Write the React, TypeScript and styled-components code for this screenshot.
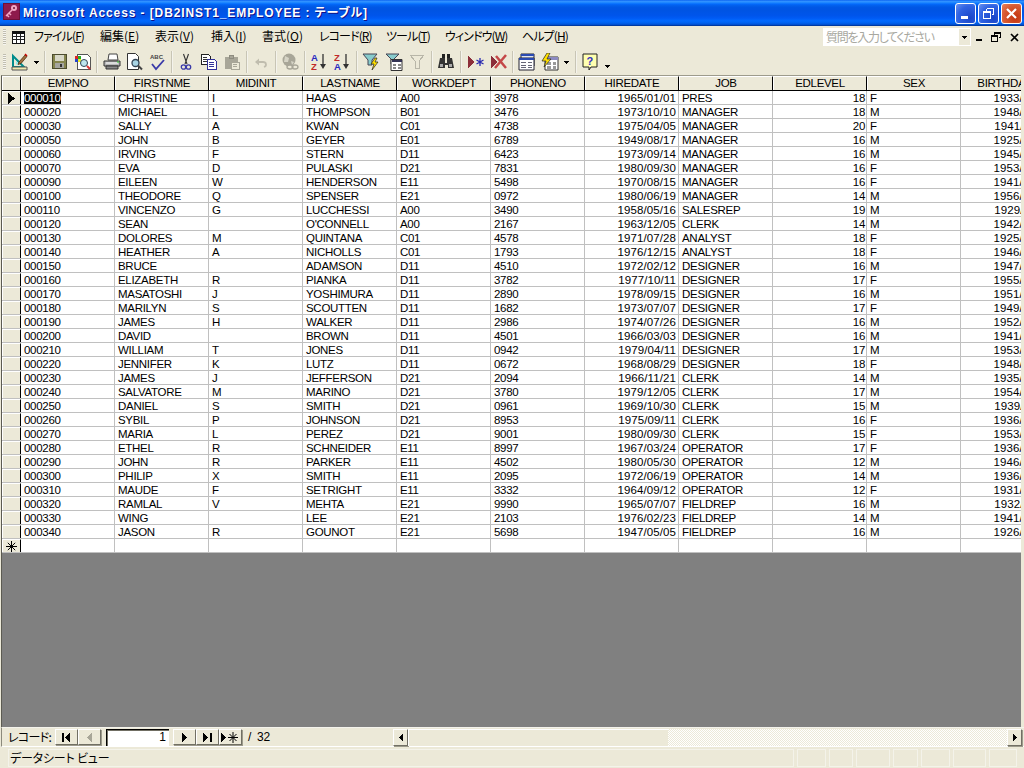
import React from "react";
import styled, { createGlobalStyle } from "styled-components";

const Global = createGlobalStyle`
  html, body { margin: 0; padding: 0; background: #ece9d8; overflow: hidden; }
  * { box-sizing: border-box; }
`;

const UI = `"Liberation Sans", "Noto Sans CJK JP", sans-serif`;
const JP = `"Noto Sans CJK JP", "Liberation Sans", sans-serif`;

const Window = styled.div`
  width: 1024px;
  height: 768px;
  display: flex;
  flex-direction: column;
  background: #ece9d8;
  font: 12px ${UI};
  color: #000;
  overflow: hidden;
`;

const TitleBar = styled.div`
  height: 26px;
  flex: none;
  display: flex;
  align-items: center;
  padding: 0 2px 3px 3px;
  background: linear-gradient(180deg, #0058ee 0%, #3593ff 4%, #288eff 8%, #127dff 12%, #0369fc 16%, #0262ee 20%, #0057e5 28%, #0054e3 40%, #0055eb 60%, #005bf5 70%, #026afe 80%, #0062ef 88%, #0052d6 94%, #0040ab 97%, #003092 100%);
`;

const TitleText = styled.div`
  margin-left: 3px;
  flex: 1;
  color: #fff;
  font: bold 12px ${UI};
  font-feature-settings: "palt";
  letter-spacing: 0.9px;
  text-shadow: 1px 1px 0 #0f1089;
  white-space: nowrap;
`;

const CaptionButton = styled.div<{ $close?: boolean }>`
  width: 21px;
  height: 21px;
  margin: 3px 0 0 2px;
  border: 1px solid #fff;
  border-radius: 3px;
  display: flex;
  align-items: center;
  justify-content: center;
  background: ${(p) =>
    p.$close
      ? "radial-gradient(circle at 70% 70%, #c2340f 0%, #d85a32 60%, #e9835f 100%)"
      : "radial-gradient(circle at 75% 75%, #1a46c8 0%, #2f62e2 60%, #6a92f0 100%)"};
`;

const MenuBar = styled.div`
  height: 22px;
  flex: none;
  display: flex;
  align-items: center;
  padding-left: 3px;
`;

const Grip = styled.div<{ $h: number }>`
  width: 3px;
  height: ${(p) => p.$h}px;
  flex: none;
  background: repeating-linear-gradient(180deg, #c1beb0 0 1px, #f7f6f0 1px 2px);
`;

const MenuIcon = styled.div`
  width: 14px;
  height: 14px;
  margin-left: 5px;
  flex: none;
  display: flex;
`;

const MenuItem = styled.div<{ $w: number; $tight?: boolean }>`
  width: ${(p) => p.$w}px;
  flex: none;
  font: 12px ${JP};
  font-feature-settings: "palt";
  letter-spacing: ${(p) => (p.$tight ? "-0.9px" : "0")};
  line-height: 14px;
  padding-bottom: 2px;
  white-space: nowrap;
  u { text-underline-offset: 1px; }
`;

const HelpBox = styled.div`
  width: 148px;
  height: 18px;
  margin-left: auto;
  background: #fff;
  display: flex;
  align-items: center;
  padding-left: 3px;
  font: 12px ${JP};
  font-feature-settings: "palt";
  letter-spacing: -1.3px;
  line-height: 15px;
  color: #a8a8a0;
  white-space: nowrap;
`;

const HelpText = styled.span`
  flex: 1;
  padding-bottom: 1px;
`;

const HelpDrop = styled.div`
  width: 11px;
  height: 16px;
  margin-right: 1px;
  background: #ece9d8;
  display: flex;
  align-items: center;
  justify-content: center;
`;

const MdiControls = styled.div`
  width: 53px;
  flex: none;
  display: flex;
  align-items: center;
  padding-left: 5px;
`;

const MdiSlot = styled.div<{ $w: number }>`
  width: ${(p) => p.$w}px;
  flex: none;
  display: flex;
  align-items: center;
`;

const Toolbar = styled.div`
  height: 27px;
  flex: none;
  display: flex;
  align-items: center;
  padding: 1px 0 0 3px;
`;

const Tool = styled.div<{ $w?: number; $ml?: number; $low?: boolean }>`
  width: ${(p) => p.$w ?? 23}px;
  margin-left: ${(p) => p.$ml ?? 0}px;
  height: 22px;
  padding-top: ${(p) => (p.$low ? 9 : 0)}px;
  flex: none;
  display: flex;
  align-items: center;
  justify-content: center;
`;

const Divider = styled.div<{ $l: number; $r: number }>`
  width: 2px;
  height: 22px;
  flex: none;
  margin: 0 ${(p) => p.$r}px 0 ${(p) => p.$l}px;
  background: #c8c5b5;
  border-right: 1px solid #f4f3ec;
`;

const Sheet = styled.div`
  flex: 1;
  min-height: 0;
  display: flex;
  background: #ece9d8;
  padding: 0 3px 0 1px;
`;

const SheetClip = styled.div`
  flex: 1;
  min-width: 0;
  background: #808080;
  border-top: 1px solid #9d9b8c;
  border-left: 1px solid #5c5b52;
  overflow: hidden;
`;

const Grid = styled.div`
  width: 1150px;
  font-size: 11.5px;
  letter-spacing: -0.3px;
`;

const HeaderRow = styled.div`
  display: flex;
  height: 15px;
  border-bottom: 1px solid #000;
`;

const Corner = styled.div`
  width: 19px;
  flex: none;
  background: #ece9d8;
  border-top: 1px solid #fff;
  border-left: 1px solid #fff;
  border-right: 1px solid #000;
`;

const HeaderCell = styled.div`
  width: 94px;
  flex: none;
  background: #ece9d8;
  border-top: 1px solid #fff;
  border-left: 1px solid #fff;
  border-right: 1px solid #000;
  text-align: center;
  line-height: 13px;
  overflow: hidden;
  white-space: nowrap;
`;

const Row = styled.div`
  display: flex;
  height: 14px;
  background: #fff;
  border-bottom: 1px solid #c0c0c0;
`;

const Selector = styled.div`
  width: 19px;
  flex: none;
  background: #ece9d8;
  border-top: 1px solid #fff;
  border-left: 1px solid #fff;
  border-right: 1px solid #000;
  display: flex;
  align-items: center;
  justify-content: center;
`;

const Cell = styled.div<{ $right?: boolean; $date?: boolean; $pad?: number }>`
  width: 94px;
  flex: none;
  height: 13px;
  border-right: 1px solid #c0c0c0;
  padding: 0 ${(p) => p.$pad ?? 2}px 0 3px;
  text-align: ${(p) => (p.$right ? "right" : "left")};
  letter-spacing: ${(p) => (p.$date ? "0.1px" : "-0.3px")};
  line-height: 15px;
  overflow: hidden;
  white-space: nowrap;
`;

const Selected = styled.div`
  width: fit-content;
  background: #000;
  color: #fff;
  height: 12px;
  margin-top: 1px;
  line-height: 13px;
`;

const NavBar = styled.div`
  height: 20px;
  flex: none;
  display: flex;
  align-items: center;
  border-top: 1px solid #f4f3ec;
  border-bottom: 1px solid #fff;
  border-left: 1px solid #8c8a7c;
  margin-left: 1px;
  padding-right: 2px;
`;

const NavLabel = styled.div`
  width: 53px;
  padding: 0 0 1px 6px;
  font: 12px ${JP};
  font-feature-settings: "palt";
  letter-spacing: -0.7px;
  line-height: 15px;
  white-space: nowrap;
`;

const NavButton = styled.div<{ $ml?: number; $w?: number; $h?: number }>`
  width: ${(p) => p.$w ?? 23}px;
  height: ${(p) => p.$h ?? 16}px;
  margin-left: ${(p) => p.$ml ?? 0}px;
  flex: none;
  background: #ece9d8;
  border: 1px solid;
  border-color: #fff #716f64 #716f64 #fff;
  box-shadow: 1px 1px 0 #9d9b8c;
  display: flex;
  align-items: center;
  justify-content: center;
`;

const RecordInput = styled.div`
  width: 63px;
  height: 17px;
  margin-left: 5px;
  flex: none;
  background: #fff;
  border-style: solid;
  border-color: #000;
  border-width: 1px 0 0 1px;
  box-shadow: inset 1px 1px 0 #716f64;
  text-align: right;
  padding-right: 3px;
  line-height: 15px;
`;

const RecordCount = styled.div`
  width: 145px;
  margin-left: 6px;
  flex: none;
  word-spacing: 3px;
  letter-spacing: -0.3px;
`;

const Track = styled.div`
  flex: 1;
  height: 17px;
  background: repeating-conic-gradient(#ece9d8 0 25%, #ffffff 0 50%) 0 0 / 2px 2px;
`;

const Thumb = styled.div`
  width: 260px;
  height: 17px;
  background: #ece9d8;
  border-left: 1px solid #fff;
  border-top: 1px solid #fff;
`;

const StatusBar = styled.div`
  height: 21px;
  flex: none;
  display: flex;
  align-items: center;
  padding: 0 7px 0 8px;
  gap: 3px;
`;

const StatusPanel = styled.div<{ $w?: number }>`
  ${(p) => (p.$w ? `width: ${p.$w}px; flex: none;` : "flex: 1;")}
  height: 18px;
  border: 1px solid #f4f3ea;
  padding-left: 1px;
  font: 12px ${JP};
  font-feature-settings: "palt";
  letter-spacing: -0.2px;
  line-height: 15px;
  white-space: nowrap;
`;

type IconProps = { children: React.ReactNode; w?: number; h?: number };
const Svg = ({ children, w = 16, h = 16 }: IconProps) => (
  <svg width={w} height={h} viewBox={`0 0 ${w} ${h}`} shapeRendering="crispEdges">{children}</svg>
);
const Smooth = ({ children }: { children: React.ReactNode }) => (
  <svg width={18} height={18} viewBox="0 0 18 18">{children}</svg>
);

const DropArrow = () => (
  <Svg w={5} h={3}><path d="M0 0h5v1h-1v1h-1v1h-1v-1h-1v-1h-1z" fill="#000" /></Svg>
);

const DesignIcon = () => (
  <Smooth>
    <path d="M2 14V3l11 11z" fill="none" stroke="#008c8c" strokeWidth="2" />
    <path d="M5 11.500V8l3.500 3.500z" fill="#8ee" />
    <path d="M1 14h15v3H1z" fill="#efe9b0" stroke="#555" strokeWidth="1" />
    <path d="M8 9l6-7 2 1.500-6 7-3 1z" fill="#a07040" stroke="#402000" strokeWidth=".7" />
    <path d="M14 1l2 2" stroke="#c00" strokeWidth="1.500" />
  </Smooth>
);
const SaveIcon = () => (
  <Svg>
    <path d="M0 0h15v15H0z" fill="#4c4c30" />
    <path d="M1 1h13v13H1z" fill="#85854e" />
    <path d="M3 1h9v6H3z" fill="#d8d8c8" />
    <path d="M3 9h9v5H3z" fill="#a5a5a0" />
    <path d="M8 10h2v3H8z" fill="#333" />
  </Svg>
);
const SearchPageIcon = () => (
  <Svg>
    <path d="M2 0h10l3 3v12H2z" fill="#fff" stroke="#555" />
    <path d="M0 2h3v3H0z" fill="#d22" /><path d="M3 2h3v3H3z" fill="#2a2" />
    <path d="M0 5h3v3H0z" fill="#24c" /><path d="M3 5h3v3H3z" fill="#ee2" />
    <circle cx="9" cy="9" r="3.500" fill="#bfe5ee" stroke="#345" shapeRendering="auto" />
    <path d="M12 12l3 3" stroke="#d33" strokeWidth="2" shapeRendering="auto" />
  </Svg>
);
const PrintIcon = () => (
  <Smooth>
    <path d="M6 1h8l1 6H5z" fill="#fff" stroke="#444" />
    <path d="M1 8h16v5H1z" fill="#b8b8b8" stroke="#333" />
    <path d="M3 13h12v3H3z" fill="#888" stroke="#333" />
    <path d="M3 10h12" stroke="#fff" />
    <path d="M14 9h2" stroke="#3c3" />
  </Smooth>
);
const PreviewIcon = () => (
  <Smooth>
    <path d="M1.500.5h8l3 3v13h-11z" fill="#fff" stroke="#333" />
    <circle cx="9.500" cy="10" r="3.500" fill="#a8d4e4" stroke="#345" strokeWidth="1.300" />
    <path d="M12 12.500l4 4" stroke="#444" strokeWidth="2" />
  </Smooth>
);
const SpellIcon = () => (
  <Smooth>
    <text x="1" y="6" fontFamily="Liberation Sans" fontSize="6" fontWeight="bold" fill="#444">ABC</text>
    <path d="M3 11l4 5 8-9" fill="none" stroke="#3a3aa8" strokeWidth="1.800" />
  </Smooth>
);
const CutIcon = () => (
  <Smooth>
    <path d="M6.500 1l3.500 10M11.500 1L8 11" stroke="#333" strokeWidth="1.100" fill="none" />
    <circle cx="6.500" cy="14" r="2.200" fill="none" stroke="#3a3aa8" strokeWidth="1.300" />
    <circle cx="11.500" cy="14" r="2.200" fill="none" stroke="#3a3aa8" strokeWidth="1.300" />
  </Smooth>
);
const CopyIcon = () => (
  <Svg>
    <path d="M0 0h7l2 2v8H0z" fill="#fff" stroke="#222" />
    <path d="M2 3h4M2 5h4M2 7h4" stroke="#333" />
    <path d="M6 5h7l2 2v8H6z" fill="#fff" stroke="#33339a" />
    <path d="M8 8h5M8 10h5M8 12h5" stroke="#33339a" />
  </Svg>
);
const PasteIcon = () => (
  <Svg>
    <path d="M1 3h12v11H1z" fill="#a8a698" stroke="#a8a698" />
    <path d="M5 1h4v3H5z" fill="#a8a698" stroke="#8e8c80" />
    <path d="M7 8h8v7H7z" fill="#ece9d8" stroke="#a8a698" />
    <path d="M9 10h4M9 12h4" stroke="#a8a698" />
  </Svg>
);
const UndoIcon = () => (
  <Smooth>
    <path d="M3 9l4-3.500v7z" fill="#c0bdae" />
    <path d="M6 9h5c3.500 0 4 4 1 5" fill="none" stroke="#c0bdae" strokeWidth="1.800" />
  </Smooth>
);
const LinkIcon = () => (
  <Smooth>
    <circle cx="8" cy="7" r="6.500" fill="#a8a698" />
    <path d="M4 3l4 2-1 4H3zM10 8l3 1-2 3z" fill="#d6d4c6" />
    <ellipse cx="9" cy="14" rx="3" ry="2" fill="#ece9d8" stroke="#a8a698" strokeWidth="1.300" />
    <ellipse cx="14" cy="14" rx="3" ry="2" fill="none" stroke="#a8a698" strokeWidth="1.300" />
  </Smooth>
);
const SortIcon = ({ down }: { down?: boolean }) => (
  <svg width={16} height={18} viewBox="0 0 16 18">
    <text x="0" y="8" fontFamily="Liberation Sans" fontSize="9.500" fontWeight="bold" fill={down ? "#c02828" : "#2828c0"}>{down ? "Z" : "A"}</text>
    <text x="0" y="17" fontFamily="Liberation Sans" fontSize="9.500" fontWeight="bold" fill={down ? "#2828c0" : "#c02828"}>{down ? "A" : "Z"}</text>
    <path d="M12 1v11" stroke="#333" strokeWidth="1.300" />
    <path d="M9 11h6l-3 5z" fill="#333" />
  </svg>
);
const Funnel = ({ fill, stroke }: { fill: string; stroke: string }) => (
  <path d="M1 1h14L10 7v7H6V7z" fill={fill} stroke={stroke} />
);
const FilterSelIcon = () => (
  <Smooth>
    <path d="M1 1h14l-5 6v5H6V7z" fill="#8cc" stroke="#445" />
    <path d="M13 5l-4 6h3l-2 6 6-8h-3l2-4z" fill="#ffe000" stroke="#222" strokeWidth=".7" />
  </Smooth>
);
const FilterFormIcon = () => (
  <Smooth>
    <path d="M1 1h13l-5 5v5H6V6z" fill="#8cc" stroke="#445" />
    <path d="M6 6.500h11v11H6z" fill="#fff" stroke="#333" />
    <path d="M7 7h10v2H7z" fill="#335" />
    <path d="M8 11h3v2H8zM13 11h3v2h-3zM8 14h3v2H8zM13 14h3v2h-3z" fill="#888" />
  </Smooth>
);
const FilterIcon = () => (
  <Svg><Funnel fill="#ece9d8" stroke="#b8b6a8" /></Svg>
);
const BinocularIcon = () => (
  <Smooth>
    <path d="M5 1h3v4H5zM10 1h3v4h-3z" fill="#222" />
    <path d="M3 5h5v5h2V5h5l2 10h-6v-3H8v3H1z" fill="#333" />
    <path d="M3 11h3v3H3zM12 11h3v3h-3z" fill="#aaa" />
  </Smooth>
);
const NewRecordIcon = () => (
  <Svg>
    <path d="M0 2l7 6-7 6z" fill="#8c2f3a" />
    <path d="M12 4v8M8.500 6l7 4M15.500 6l-7 4" stroke="#2a2ab0" strokeWidth="1.300" shapeRendering="auto" />
  </Svg>
);
const DeleteRecordIcon = () => (
  <Svg>
    <path d="M0 2l7 6-7 6z" fill="#8c2f3a" />
    <path d="M4 14L15 1M5 2l10 12" stroke="#c44848" strokeWidth="2.500" shapeRendering="auto" />
  </Svg>
);
const DbWindowIcon = () => (
  <Smooth>
    <path d="M3 1h13v12H3z" fill="#dfe6f4" stroke="#223" />
    <path d="M3 1h13v2H3z" fill="#2a4ab0" />
    <path d="M1 5h15v12H1z" fill="#fff" stroke="#223" />
    <path d="M1 5h15v2H1z" fill="#2a4ab0" />
    <path d="M3 9h5v1H3zM10 9h4v1h-4zM3 12h5v1H3zM10 12h4v1h-4zM3 14h5v1H3zM10 14h4v1h-4z" fill="#667" />
  </Smooth>
);
const NewObjectIcon = () => (
  <Smooth>
    <path d="M4 4h13v13H4z" fill="#fff" stroke="#333" />
    <path d="M4 4h13v3H4z" fill="#8c8ac0" />
    <path d="M6 9h4v3H6zM12 9h3v3h-3zM6 13h4v3H6zM12 13h3v3h-3z" fill="#999" />
    <path d="M6 0L1 8h4l-2 6 7-8H6l3-6z" fill="#ffe000" stroke="#222" strokeWidth=".7" />
  </Smooth>
);
const HelpIcon = () => (
  <Smooth>
    <path d="M1 1h14v13H9l-2 3v-3H1z" fill="#ffffb0" stroke="#222" />
    <text x="4.500" y="12" fontFamily="Liberation Sans" fontSize="11" fontWeight="bold" fill="#3030c0">?</text>
  </Smooth>
);
const TableMenuIcon = () => (
  <Svg w={14} h={14}>
    <path d="M1 1h12v12H1z" fill="#fff" stroke="#111" />
    <path d="M1 1h12v3H1z" fill="#111" />
    <path d="M1 6h12M1 9h12M5 4v9M9 4v9" stroke="#222" />
  </Svg>
);
const AccessLogo = () => (
  <Svg w={17} h={17}>
    <path d="M0 0h17v17H0z" fill="#6d0f38" />
    <path d="M1 1h15v15H1z" fill="#8e1a4c" />
    <circle cx="11" cy="5" r="3" fill="#f2a6c4" shapeRendering="auto" />
    <circle cx="11" cy="5" r="1" fill="#6d0f38" shapeRendering="auto" />
    <path d="M9 7l-6 6M4 12l2 2M6 10l2 2" stroke="#f2a6c4" strokeWidth="1.500" shapeRendering="auto" />
  </Svg>
);

const NavFirst = () => (<Svg w={9} h={9}><path d="M0 0h2v9H0zM8 0v9L3 4.500z" fill="#000" /></Svg>);
const NavPrev = () => (<Svg w={6} h={9}><path d="M5 0v9L0 4.500z" fill="#a8a698" /></Svg>);
const NavNext = () => (<Svg w={6} h={9}><path d="M0 0v9l5-4.500z" fill="#000" /></Svg>);
const NavLast = () => (<Svg w={9} h={9}><path d="M7 0h2v9H7zM0 0v9l5-4.500z" fill="#000" /></Svg>);
const NavNew = () => (
  <Svg w={19} h={11}>
    <path d="M0 1v9l5-4.500z" fill="#000" />
    <path d="M12 0v11M7 5.500h10M8.500 2l7 7M15.500 2l-7 7" stroke="#000" shapeRendering="auto" />
  </Svg>
);
const ScrollLeft = () => (<Svg w={4} h={7}><path d="M4 0v7L0 3.500z" fill="#000" /></Svg>);
const ScrollRight = () => (<Svg w={4} h={7}><path d="M0 0v7l4-3.500z" fill="#000" /></Svg>);
const NewRowStar = () => (
  <svg width={11} height={11} viewBox="0 0 11 11">
    <path d="M5.500 0v11M0 5.500h11M1.800 1.800l7.400 7.400M9.200 1.800l-7.400 7.400" stroke="#000" strokeWidth="1" />
  </svg>
);

const MIN = () => (<Svg w={13} h={13}><path d="M2 9h7v3H2z" fill="#fff" /></Svg>);
const RESTORE = () => (
  <Svg w={13} h={13}>
    <path d="M4.500 1.500h7v6h-2M4.500 1.500v2" fill="none" stroke="#fff" />
    <path d="M1.500 4.500h7v7h-7z" fill="none" stroke="#fff" />
    <path d="M1.500 4.500h7" stroke="#fff" strokeWidth="2" />
  </Svg>
);
const CLOSE = () => (
  <svg width={13} height={13} viewBox="0 0 13 13">
    <path d="M2 2l9 9M11 2l-9 9" stroke="#fff" strokeWidth="2.200" />
  </svg>
);
const MdiMin = () => (<Svg w={8} h={8}><path d="M0 6h6v2H0z" fill="#000" /></Svg>);
const MdiRestore = () => (
  <Svg w={10} h={10}>
    <path d="M3.500 .5h6v5h-2M3.500 .5v2" fill="none" stroke="#000" />
    <path d="M.5 3.500h6v6h-6z" fill="none" stroke="#000" />
    <path d="M0 3h7v2H0zM3 0h7v2H3z" fill="#000" />
  </Svg>
);
const MdiClose = () => (
  <svg width={9} height={9} viewBox="0 0 9 9"><path d="M1 1l7 7M8 1L1 8" stroke="#000" strokeWidth="1.700" /></svg>
);

const COLUMNS = ["EMPNO", "FIRSTNME", "MIDINIT", "LASTNAME", "WORKDEPT", "PHONENO", "HIREDATE", "JOB", "EDLEVEL", "SEX", "BIRTHDATE"];

const DATA: string[][] = [
  ["000010", "CHRISTINE", "I", "HAAS", "A00", "3978", "1965/01/01", "PRES", "18", "F", "1933/08/24"],
  ["000020", "MICHAEL", "L", "THOMPSON", "B01", "3476", "1973/10/10", "MANAGER", "18", "M", "1948/02/02"],
  ["000030", "SALLY", "A", "KWAN", "C01", "4738", "1975/04/05", "MANAGER", "20", "F", "1941/05/11"],
  ["000050", "JOHN", "B", "GEYER", "E01", "6789", "1949/08/17", "MANAGER", "16", "M", "1925/09/15"],
  ["000060", "IRVING", "F", "STERN", "D11", "6423", "1973/09/14", "MANAGER", "16", "M", "1945/07/07"],
  ["000070", "EVA", "D", "PULASKI", "D21", "7831", "1980/09/30", "MANAGER", "16", "F", "1953/05/26"],
  ["000090", "EILEEN", "W", "HENDERSON", "E11", "5498", "1970/08/15", "MANAGER", "16", "F", "1941/05/15"],
  ["000100", "THEODORE", "Q", "SPENSER", "E21", "0972", "1980/06/19", "MANAGER", "14", "M", "1956/12/18"],
  ["000110", "VINCENZO", "G", "LUCCHESSI", "A00", "3490", "1958/05/16", "SALESREP", "19", "M", "1929/11/05"],
  ["000120", "SEAN", "", "O'CONNELL", "A00", "2167", "1963/12/05", "CLERK", "14", "M", "1942/10/18"],
  ["000130", "DOLORES", "M", "QUINTANA", "C01", "4578", "1971/07/28", "ANALYST", "18", "F", "1925/09/15"],
  ["000140", "HEATHER", "A", "NICHOLLS", "C01", "1793", "1976/12/15", "ANALYST", "18", "F", "1946/01/19"],
  ["000150", "BRUCE", "", "ADAMSON", "D11", "4510", "1972/02/12", "DESIGNER", "16", "M", "1947/05/17"],
  ["000160", "ELIZABETH", "R", "PIANKA", "D11", "3782", "1977/10/11", "DESIGNER", "17", "F", "1955/04/12"],
  ["000170", "MASATOSHI", "J", "YOSHIMURA", "D11", "2890", "1978/09/15", "DESIGNER", "16", "M", "1951/01/05"],
  ["000180", "MARILYN", "S", "SCOUTTEN", "D11", "1682", "1973/07/07", "DESIGNER", "17", "F", "1949/02/21"],
  ["000190", "JAMES", "H", "WALKER", "D11", "2986", "1974/07/26", "DESIGNER", "16", "M", "1952/06/25"],
  ["000200", "DAVID", "", "BROWN", "D11", "4501", "1966/03/03", "DESIGNER", "16", "M", "1941/05/29"],
  ["000210", "WILLIAM", "T", "JONES", "D11", "0942", "1979/04/11", "DESIGNER", "17", "M", "1953/02/23"],
  ["000220", "JENNIFER", "K", "LUTZ", "D11", "0672", "1968/08/29", "DESIGNER", "18", "F", "1948/03/19"],
  ["000230", "JAMES", "J", "JEFFERSON", "D21", "2094", "1966/11/21", "CLERK", "14", "M", "1935/05/30"],
  ["000240", "SALVATORE", "M", "MARINO", "D21", "3780", "1979/12/05", "CLERK", "17", "M", "1954/03/31"],
  ["000250", "DANIEL", "S", "SMITH", "D21", "0961", "1969/10/30", "CLERK", "15", "M", "1939/11/12"],
  ["000260", "SYBIL", "P", "JOHNSON", "D21", "8953", "1975/09/11", "CLERK", "16", "F", "1936/10/05"],
  ["000270", "MARIA", "L", "PEREZ", "D21", "9001", "1980/09/30", "CLERK", "15", "F", "1953/05/26"],
  ["000280", "ETHEL", "R", "SCHNEIDER", "E11", "8997", "1967/03/24", "OPERATOR", "17", "F", "1936/03/28"],
  ["000290", "JOHN", "R", "PARKER", "E11", "4502", "1980/05/30", "OPERATOR", "12", "M", "1946/07/09"],
  ["000300", "PHILIP", "X", "SMITH", "E11", "2095", "1972/06/19", "OPERATOR", "14", "M", "1936/10/27"],
  ["000310", "MAUDE", "F", "SETRIGHT", "E11", "3332", "1964/09/12", "OPERATOR", "12", "F", "1931/04/21"],
  ["000320", "RAMLAL", "V", "MEHTA", "E21", "9990", "1965/07/07", "FIELDREP", "16", "M", "1932/08/11"],
  ["000330", "WING", "", "LEE", "E21", "2103", "1976/02/23", "FIELDREP", "14", "M", "1941/07/18"],
  ["000340", "JASON", "R", "GOUNOT", "E21", "5698", "1947/05/05", "FIELDREP", "16", "M", "1926/05/17"],
];

const RIGHT = new Set([6, 8, 10]);
const DATES = new Set([6, 10]);

const MENUS: [string, string, number, boolean][] = [
  ["ファイル(", "F", 66, true],
  ["編集(", "E", 55, false],
  ["表示(", "V", 56, false],
  ["挿入(", "I", 51, false],
  ["書式(", "O", 57, false],
  ["レコード(", "R", 67, true],
  ["ツール(", "T", 59, true],
  ["ウィンドウ(", "W", 77, true],
  ["ヘルプ(", "H", 50, true],
];

export default function App() {
  return (
    <Window>
      <Global />
      <TitleBar>
        <AccessLogo />
        <TitleText>Microsoft Access - [DB2INST1_EMPLOYEE : テーブル]</TitleText>
        <CaptionButton><MIN /></CaptionButton>
        <CaptionButton><RESTORE /></CaptionButton>
        <CaptionButton $close><CLOSE /></CaptionButton>
      </TitleBar>

      <MenuBar>
        <Grip $h={16} />
        <MenuIcon><TableMenuIcon /></MenuIcon>
        <MenuItem $w={9} />
        {MENUS.map(([label, key, w, tight]) => (
          <MenuItem key={key} $w={w} $tight={tight}>{label}<u>{key}</u>)</MenuItem>
        ))}
        <HelpBox>
          <HelpText>質問を入力してください</HelpText>
          <HelpDrop><DropArrow /></HelpDrop>
        </HelpBox>
        <MdiControls>
          <MdiSlot $w={15}><MdiMin /></MdiSlot>
          <MdiSlot $w={19}><MdiRestore /></MdiSlot>
          <MdiSlot $w={9}><MdiClose /></MdiSlot>
        </MdiControls>
      </MenuBar>

      <Toolbar>
        <Grip $h={16} />
        <Tool $ml={2}><DesignIcon /></Tool>
        <Tool $w={11}><DropArrow /></Tool>
        <Divider $l={2} $r={2} />
        <Tool><SaveIcon /></Tool>
        <Tool><SearchPageIcon /></Tool>
        <Divider $l={2} $r={2} />
        <Tool><PrintIcon /></Tool>
        <Tool><PreviewIcon /></Tool>
        <Tool><SpellIcon /></Tool>
        <Divider $l={2} $r={1} />
        <Tool><CutIcon /></Tool>
        <Tool><CopyIcon /></Tool>
        <Tool><PasteIcon /></Tool>
        <Divider $l={3} $r={1} />
        <Tool><UndoIcon /></Tool>
        <Divider $l={3} $r={1} />
        <Tool><LinkIcon /></Tool>
        <Divider $l={3} $r={1} />
        <Tool><SortIcon /></Tool>
        <Tool><SortIcon down /></Tool>
        <Divider $l={3} $r={1} />
        <Tool><FilterSelIcon /></Tool>
        <Tool><FilterFormIcon /></Tool>
        <Tool><FilterIcon /></Tool>
        <Divider $l={3} $r={1} />
        <Tool><BinocularIcon /></Tool>
        <Divider $l={3} $r={2} />
        <Tool><NewRecordIcon /></Tool>
        <Tool><DeleteRecordIcon /></Tool>
        <Divider $l={2} $r={1} />
        <Tool><DbWindowIcon /></Tool>
        <Tool><NewObjectIcon /></Tool>
        <Tool $w={11}><DropArrow /></Tool>
        <Divider $l={3} $r={2} />
        <Tool><HelpIcon /></Tool>
        <Tool $w={11} $low><DropArrow /></Tool>
      </Toolbar>

      <Sheet>
        <SheetClip>
          <Grid>
            <HeaderRow>
              <Corner />
              {COLUMNS.map((c) => <HeaderCell key={c}>{c}</HeaderCell>)}
            </HeaderRow>
            {DATA.map((r, i) => (
              <Row key={r[0]}>
                <Selector>
                  {i === 0 && <Svg w={9} h={11}><path d="M1 0v11l7-5.500z" fill="#000" /></Svg>}
                </Selector>
                {r.map((v, j) => (
                  <Cell key={j} $right={RIGHT.has(j)} $date={DATES.has(j)} $pad={j === 8 ? 1 : 2}>
                    {i === 0 && j === 0 ? <Selected>{v}</Selected> : v}
                  </Cell>
                ))}
              </Row>
            ))}
            <Row>
              <Selector><NewRowStar /></Selector>
              {COLUMNS.map((c) => <Cell key={c} />)}
            </Row>
          </Grid>
        </SheetClip>
      </Sheet>

      <NavBar>
        <NavLabel>レコード:</NavLabel>
        <NavButton><NavFirst /></NavButton>
        <NavButton><NavPrev /></NavButton>
        <RecordInput>1</RecordInput>
        <NavButton $ml={4}><NavNext /></NavButton>
        <NavButton><NavLast /></NavButton>
        <NavButton><NavNew /></NavButton>
        <RecordCount>/ 32</RecordCount>
        <NavButton $w={15} $h={17}><ScrollLeft /></NavButton>
        <Track><Thumb /></Track>
        <NavButton $w={15} $h={17}><ScrollRight /></NavButton>
      </NavBar>

      <StatusBar>
        <StatusPanel>データシート ビュー</StatusPanel>
        <StatusPanel $w={29} />
        <StatusPanel $w={24} />
        <StatusPanel $w={34} />
        <StatusPanel $w={25} />
        <StatusPanel $w={29} />
        <StatusPanel $w={33} />
        <StatusPanel $w={28} />
      </StatusBar>
    </Window>
  );
}
